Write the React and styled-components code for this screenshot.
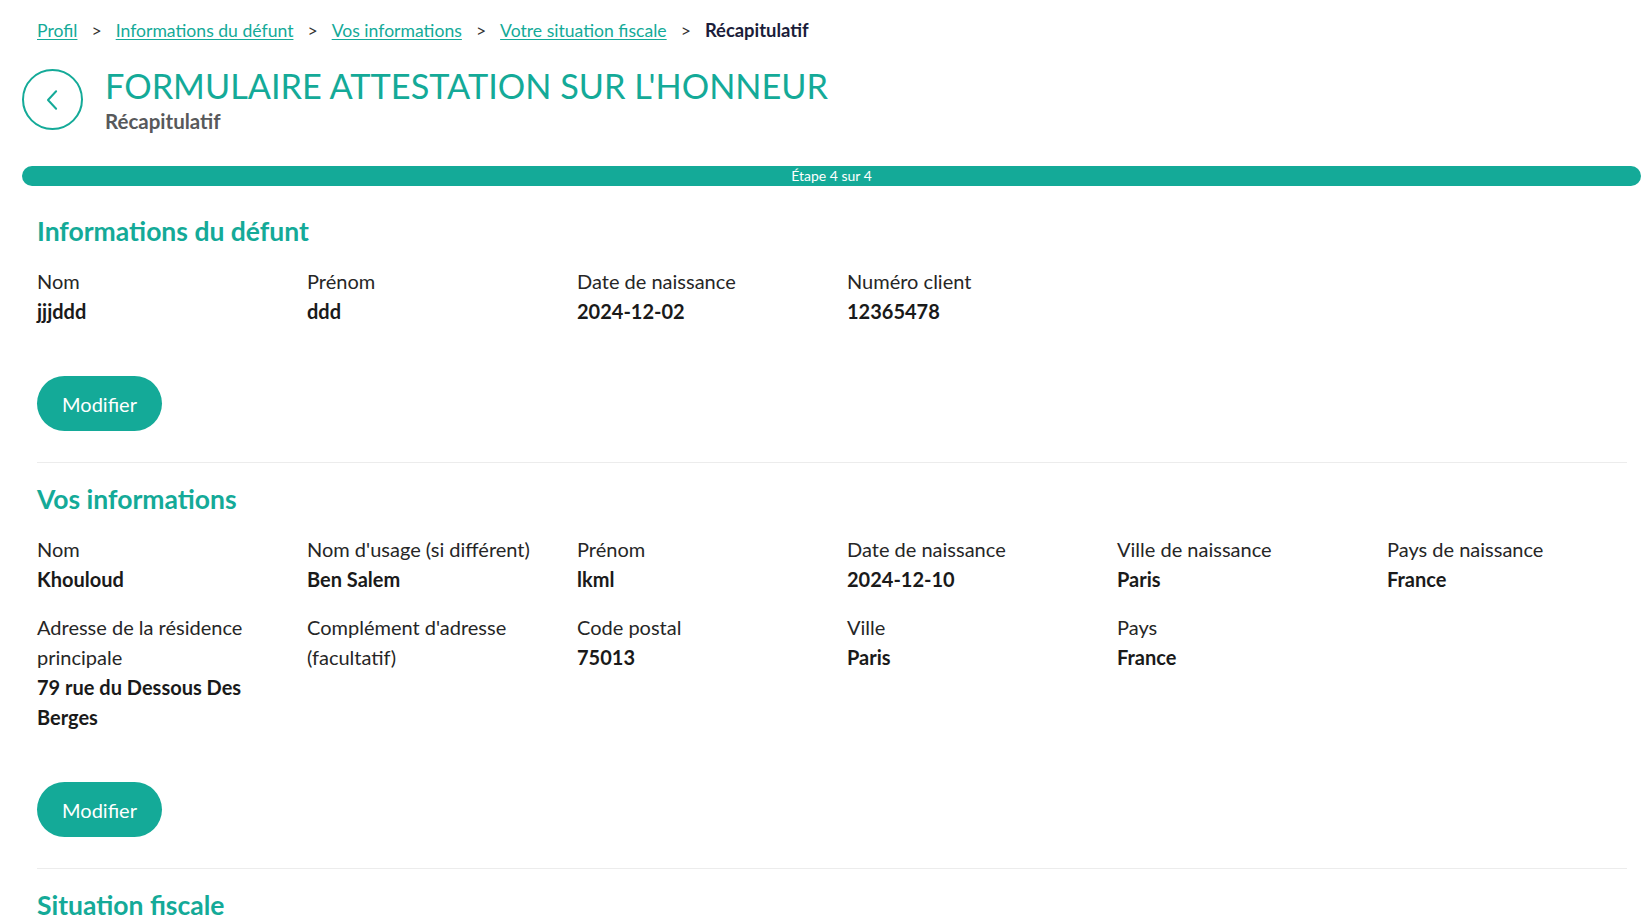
import React from 'react'
import styled, { createGlobalStyle } from 'styled-components'

const teal = '#14aa98'

const Global = createGlobalStyle`
  html, body {
    margin: 0;
    padding: 0;
    background: #fff;
    font-family: Lato, "Open Sans", "Liberation Sans", sans-serif;
    color: #222;
  }
  * { box-sizing: border-box; }
`

const Page = styled.div`
  padding: 0 7px 0 22px;
  overflow: hidden;
  height: 917px;
`

const Crumbs = styled.nav`
  display: flex;
  align-items: center;
  padding: 17px 0 0 15px;
  font-size: 17.6px;
  line-height: 27px;
`

const CrumbLink = styled.a`
  color: ${teal};
  text-decoration: underline;
  text-underline-offset: 2px;
  cursor: pointer;
`

const Sep = styled.span`
  color: #333;
  margin: 0 14px;
`

const Current = styled.span`
  font-weight: 700;
  font-size: 18.4px;
  color: #1b1d3a;
`

const Header = styled.header`
  display: flex;
  align-items: flex-start;
  gap: 22px;
  margin-top: 23px;
`

const BackButton = styled.button`
  width: 61px;
  height: 61px;
  margin-top: 2px;
  border-radius: 50%;
  border: 2px solid ${teal};
  background: #fff;
  display: flex;
  align-items: center;
  justify-content: center;
  padding: 0;
  cursor: pointer;
`

const TitleBlock = styled.div`
  display: flex;
  flex-direction: column;
`

const Title = styled.h1`
  margin: 0;
  font-size: 34.3px;
  line-height: 38px;
  font-weight: 400;
  color: ${teal};
`

const Subtitle = styled.div`
  margin-top: 3px;
  font-size: 20.5px;
  line-height: 27px;
  font-weight: 700;
  color: #58595b;
`

const Progress = styled.div`
  margin-top: 31px;
  height: 20px;
  width: 1619px;
  border-radius: 10px;
  background: ${teal};
  color: #fff;
  font-size: 14px;
  line-height: 20px;
  text-align: center;
`

const Content = styled.div`
  padding: 0 15px;
  width: 1620px;
`

const Section = styled.section`
  padding-top: ${p => (p.$first ? 31 : 22)}px;
`

const SectionTitle = styled.h2`
  margin: 0 0 22px;
  font-size: 26.5px;
  line-height: 28px;
  font-weight: 700;
  color: ${teal};
`

const Row = styled.div`
  display: flex;
  flex-wrap: wrap;
  margin: -1px -15px 0;
`

const Field = styled.div`
  flex: 0 0 16.6667%;
  max-width: 16.6667%;
  padding: 0 15px;
  margin-bottom: 18px;
  font-size: 20px;
  line-height: 30px;
`

const Label = styled.div`
  color: #262626;
`

const Value = styled.div`
  font-weight: 700;
  color: #1a1a1a;
`

const Break = styled.div`
  flex-basis: 100%;
  height: 0;
`

const Modify = styled.button`
  margin-top: 32px;
  height: 55px;
  width: 125px;
  border: none;
  border-radius: 28px;
  background: ${teal};
  color: #fff;
  font-family: inherit;
  font-size: 20px;
  cursor: pointer;
`

const Divider = styled.hr`
  margin: 31px 0 0;
  border: none;
  border-top: 1.5px solid #ececec;
`

const defunt = [
  ['Nom', 'jjjddd'],
  ['Prénom', 'ddd'],
  ['Date de naissance', '2024-12-02'],
  ['Numéro client', '12365478'],
]

const vous = [
  ['Nom', 'Khouloud'],
  ["Nom d'usage (si différent)", 'Ben Salem'],
  ['Prénom', 'lkml'],
  ['Date de naissance', '2024-12-10'],
  ['Ville de naissance', 'Paris'],
  ['Pays de naissance', 'France'],
  null,
  ['Adresse de la résidence principale', '79 rue du Dessous Des Berges'],
  ["Complément d'adresse (facultatif)", ''],
  ['Code postal', '75013'],
  ['Ville', 'Paris'],
  ['Pays', 'France'],
]

function Fields({ items }) {
  return (
    <Row>
      {items.map((it, i) =>
        it === null ? (
          <Break key={i} />
        ) : (
          <Field key={i}>
            <Label>{it[0]}</Label>
            {it[1] && <Value>{it[1]}</Value>}
          </Field>
        )
      )}
    </Row>
  )
}

export default function App() {
  return (
    <>
      <Global />
      <Page>
        <Crumbs>
          <CrumbLink>Profil</CrumbLink>
          <Sep>&gt;</Sep>
          <CrumbLink>Informations du défunt</CrumbLink>
          <Sep>&gt;</Sep>
          <CrumbLink>Vos informations</CrumbLink>
          <Sep>&gt;</Sep>
          <CrumbLink>Votre situation fiscale</CrumbLink>
          <Sep>&gt;</Sep>
          <Current>Récapitulatif</Current>
        </Crumbs>

        <Header>
          <BackButton aria-label="Retour">
            <svg width="30" height="30" viewBox="0 0 24 24" fill="none" stroke={teal} strokeWidth="1.6" strokeLinecap="round" strokeLinejoin="round">
              <polyline points="14.5 5 8 12 14.5 19" />
            </svg>
          </BackButton>
          <TitleBlock>
            <Title>FORMULAIRE ATTESTATION SUR L'HONNEUR</Title>
            <Subtitle>Récapitulatif</Subtitle>
          </TitleBlock>
        </Header>

        <Progress>Étape 4 sur 4</Progress>

        <Content>
          <Section $first>
            <SectionTitle>Informations du défunt</SectionTitle>
            <Fields items={defunt} />
            <Modify>Modifier</Modify>
            <Divider />
          </Section>

          <Section>
            <SectionTitle>Vos informations</SectionTitle>
            <Fields items={vous} />
            <Modify>Modifier</Modify>
            <Divider />
          </Section>

          <Section>
            <SectionTitle>Situation fiscale</SectionTitle>
          </Section>
        </Content>
      </Page>
    </>
  )
}
